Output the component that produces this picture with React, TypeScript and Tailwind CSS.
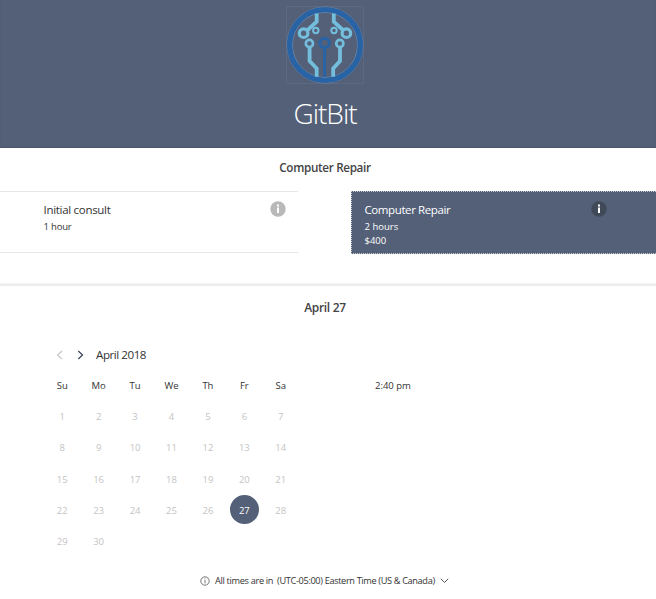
import React from "react";

const weekdays = ["Su", "Mo", "Tu", "We", "Th", "Fr", "Sa"];
const days = Array.from({ length: 30 }, (_, i) => i + 1);

function Logo() {
  return (
    <svg width="78" height="78" viewBox="0 0 78 78" fill="none" className="block">
      <rect x="0.5" y="0.5" width="77" height="77" stroke="#5f6b83" strokeWidth="0.8" />
      <circle cx="39" cy="39" r="38.1" stroke="#8196b4" strokeWidth="0.6" />
      <circle cx="39" cy="39" r="32.6" stroke="#8ba6c6" strokeWidth="0.6" />
      <circle cx="39" cy="39" r="35.4" stroke="#2864a5" strokeWidth="5.4" />
      <g stroke="#74bedd" strokeWidth="3.8">
        <path d="M30.7 7.5v8.2L20.5 25" />
        <path d="M47.8 7.5v8.2L58 25" />
        <path d="M23.6 41.5V55l7.1 7.5v8.3" />
        <path d="M54 41.5V55l-6.8 7.5v8.3" />
      </g>
      <g stroke="#74bedd" fill="#546077">
        <circle cx="17.6" cy="27.2" r="4.3" strokeWidth="3.2" />
        <circle cx="60.4" cy="27.2" r="4.3" strokeWidth="3.2" />
        <circle cx="29.8" cy="24.5" r="2.7" strokeWidth="2" />
        <circle cx="48" cy="24.5" r="2.7" strokeWidth="2" />
        <circle cx="23.4" cy="37.5" r="3.6" strokeWidth="2.6" />
        <circle cx="53.8" cy="37.5" r="3.6" strokeWidth="2.6" />
      </g>
      <circle cx="38.6" cy="37" r="4.7" stroke="#2864a5" strokeWidth="3" />
      <path d="M38.6 41.5v29.5" stroke="#2864a5" strokeWidth="3" />
    </svg>
  );
}

function InfoBadge({ className }: { className: string }) {
  return (
    <svg width="16" height="16" viewBox="0 0 16 16" className={className}>
      <circle cx="8" cy="8" r="7.7" fill="currentColor" />
      <path d="M7 3.5h2v2H7zM7 6.5h2v5.5H7z" fill="#fff" />
    </svg>
  );
}

export default function App() {
  return (
    <main className="flex h-[599px] w-[656px] flex-col overflow-hidden bg-white font-['Open_Sans','Noto_Sans',sans-serif] text-[#333]">
      <header className="flex h-[148px] flex-col items-center bg-[#546077] pt-[6px] pr-[6px] shadow-[inset_0_-1px_1px_#4c566b]">
        <Logo />
        <h1 className="mt-[9px] h-10 text-[28px] leading-10 font-light tracking-[-1px] whitespace-nowrap text-white">GitBit</h1>
      </header>

      <section className="h-[138px] border-b-2 border-[#ececec] shadow-[inset_0_-2px_1px_-1px_#f3f3f3]">
        <h2 className="h-[43px] pt-[11px] pr-[6px] text-center text-[11.7px] leading-4 font-semibold tracking-[-0.33px] text-[#444]">Computer Repair</h2>
        <div className="flex justify-between">
          <article className="flex h-[62px] w-[298px] justify-between border-y border-[#e6e6e6] pt-[9px] pr-[12px] pl-[43.5px]">
            <div>
              <h3 className="text-[11.5px] leading-[18px] tracking-[-0.3px]">Initial consult</h3>
              <p className="text-[9.5px] leading-[15px] tracking-[-0.2px]">1 hour</p>
            </div>
            <InfoBadge className="text-[#b9b9b9]" />
          </article>
          <article className="flex h-[63px] w-[305px] justify-between border border-r-0 border-dotted border-[#c6cad1] bg-[#546077] pt-[9px] pr-[49px] pl-[12.5px] text-white">
            <div>
              <h3 className="text-[11.5px] leading-[18px] tracking-[-0.4px]">Computer Repair</h3>
              <p className="text-[9.5px] leading-[15px]">2 hours</p>
              <p className="text-[9.5px] leading-[13px]">$400</p>
            </div>
            <InfoBadge className="text-[#404958]" />
          </article>
        </div>
      </section>

      <section>
        <h2 className="h-[59px] pt-[14px] pr-[6px] text-center text-[12px] leading-4 font-semibold tracking-[-0.3px] text-[#444]">April 27</h2>
        <div className="flex h-[218px] pl-11">
          <div className="w-[255px]">
            <div className="flex h-5 items-center pl-3">
              <svg width="28" height="10" viewBox="0 0 28 10" fill="none">
                <path d="M6 1L1.5 5L6 9" stroke="#c8c8c8" strokeWidth="1.2" />
                <path d="M22.3 1L26.5 5L22.3 9" stroke="#3d4859" strokeWidth="1.3" />
              </svg>
              <span className="ml-3 text-[11.6px] tracking-[-0.45px]">April 2018</span>
            </div>
            <div className="mt-[6px] grid auto-rows-[31.2px] grid-cols-7 text-center text-[9.5px]">
              {weekdays.map((day) => (
                <span key={day} className="leading-[29px]">{day}</span>
              ))}
              {days.map((day) =>
                day === 27 ? (
                  <span key={day} className="mx-auto -mt-[0.6px] size-[29px] rounded-full bg-[#546077] leading-[31px] text-white">{day}</span>
                ) : (
                  <span key={day} className="leading-[30px] text-[#c4c4c4]">{day}</span>
                ),
              )}
            </div>
          </div>
          <div className="pt-[33px] pl-[76px] text-[9.5px] leading-4">2:40 pm</div>
        </div>
      </section>

      <footer className="flex h-8 items-center pt-[3px] pl-[200px] text-[9.2px] whitespace-nowrap">
        <svg width="10" height="10" viewBox="0 0 10 10" fill="none" stroke="#555" strokeWidth="0.8">
          <circle cx="5" cy="5" r="4.2" />
          <path d="M5 4.2v3.2M5 2.4v1" />
        </svg>
        <span className="ml-[5px] tracking-[-0.32px]">All times are in</span>
        <span className="ml-[4px] tracking-[-0.35px]">(UTC-05:00) Eastern Time (US &amp; Canada)</span>
        <svg width="9" height="6" viewBox="0 0 9 6" fill="none" stroke="#555" className="ml-[5px]">
          <path d="M0.8 0.8L4.5 4.5L8.2 0.8" />
        </svg>
      </footer>
    </main>
  );
}
